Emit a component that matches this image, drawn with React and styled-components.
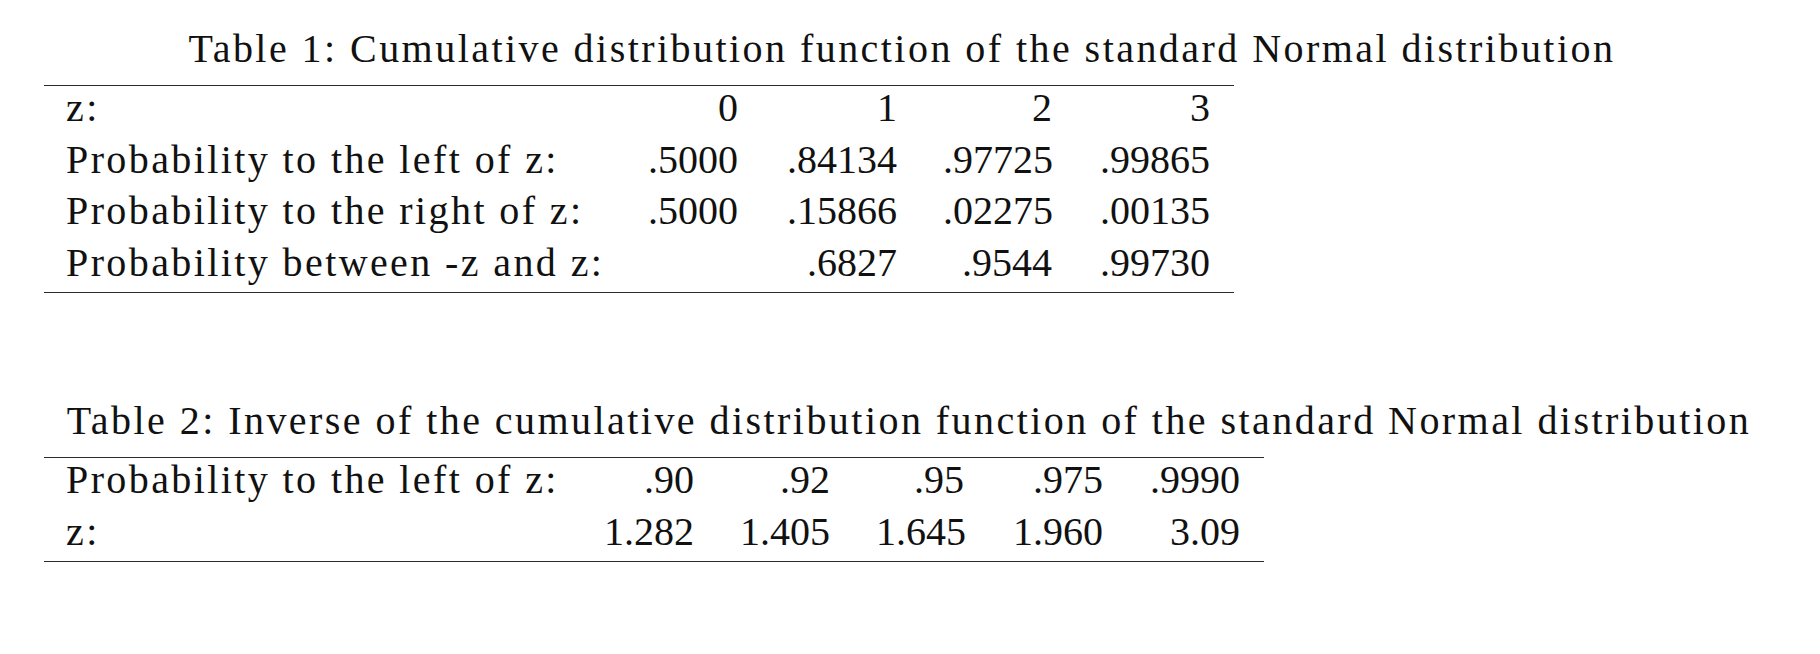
import React from 'react';
import styled, { createGlobalStyle } from 'styled-components';

const GlobalStyle = createGlobalStyle`
  html, body {
    margin: 0;
    padding: 0;
    background: #ffffff;
  }
  body {
    font-family: 'Liberation Serif', 'Times New Roman', serif;
    color: #111111;
  }
`;

const Page = styled.div`
  width: 1716px;
  padding: 26.5px 0 0 44px;
  display: flex;
  flex-direction: column;
`;

// captions are set wider than Times so they span like the LaTeX original
const Caption = styled.div`
  font-size: 40px;
  line-height: 44px;
  text-align: center;
  margin: ${(p) => p.$top || 0}px 0 14.5px 0;
  padding-left: ${(p) => p.$shift || 0}px;
  letter-spacing: 2.45px;
  white-space: nowrap;
`;

const Table = styled.table`
  border-collapse: collapse;
  border-spacing: 0;
  table-layout: fixed;
  width: ${(p) => p.$width}px;
  border-top: 1.5px solid #2b2b2b;
  border-bottom: 1.5px solid #2b2b2b;
`;

const Col = styled.col`
  width: ${(p) => p.$w}px;
`;

const Cell = styled.td`
  font-size: 40px;
  line-height: 44px;
  padding: 0 24px 7.5px 22px;
  white-space: nowrap;
  text-align: ${(p) => (p.$label ? 'left' : 'right')};
  letter-spacing: ${(p) => (p.$label ? '2.4px' : '0')};
`;

const cdf = {
  cols: [580, 138, 159, 155, 158],
  rows: [
    ['z:', '0', '1', '2', '3'],
    ['Probability to the left of z:', '.5000', '.84134', '.97725', '.99865'],
    ['Probability to the right of z:', '.5000', '.15866', '.02275', '.00135'],
    ['Probability between -z and z:', '', '.6827', '.9544', '.99730'],
  ],
};

const inverse = {
  cols: [536, 138, 136, 134, 139, 137],
  rows: [
    ['Probability to the left of z:', '.90', '.92', '.95', '.975', '.9990'],
    ['z:', '1.282', '1.405', '1.645', '1.960', '3.09'],
  ],
};

const DataTable = ({ data }) => {
  const width = data.cols.reduce((a, b) => a + b, 0);
  return (
    <Table $width={width}>
      <colgroup>
        {data.cols.map((w, i) => (
          <Col key={i} $w={w} />
        ))}
      </colgroup>
      <tbody>
        {data.rows.map((row, r) => (
          <tr key={r}>
            {row.map((cell, c) => (
              <Cell key={c} $label={c === 0}>
                {cell}
              </Cell>
            ))}
          </tr>
        ))}
      </tbody>
    </Table>
  );
};

const App = () => {
  return (
    <>
      <GlobalStyle />
      <Page>
        <Caption>
          Table 1: Cumulative distribution function of the standard Normal distribution
        </Caption>
        <DataTable data={cdf} />
        <Caption $top={105.5} $shift={14}>
          Table 2: Inverse of the cumulative distribution function of the standard Normal distribution
        </Caption>
        <DataTable data={inverse} />
      </Page>
    </>
  );
};

export default App;
